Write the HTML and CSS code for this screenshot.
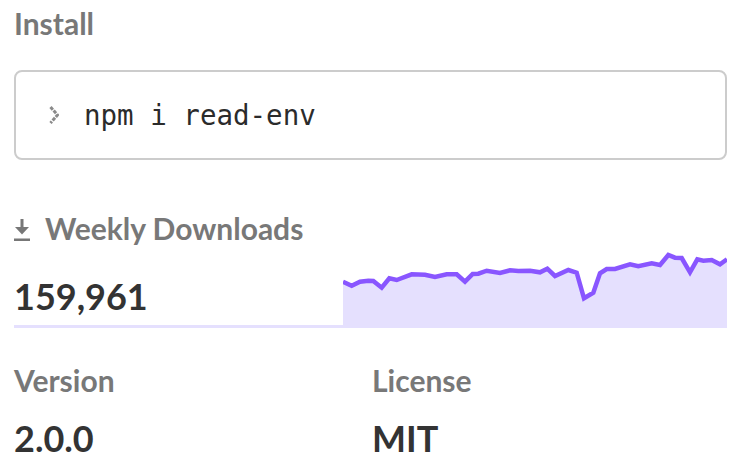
FILE: index.html
```html
<!DOCTYPE html>
<html>
<head>
<meta charset="utf-8">
<link rel="stylesheet" href="styles.css">
</head>
<body>
<div class="sidebar">
  <h3 class="label install-label">Install</h3>
  <div class="code-box">
    <svg class="chevron" width="10" height="20" viewBox="0 0 10 20"><polyline points="1.5,2 8.5,10 1.5,18" fill="none" stroke="#8a8a8a" stroke-width="3" stroke-dasharray="3.6 1.2"/></svg>
    <code class="cmd">npm i read-env</code>
  </div>

  <h3 class="label dl-label">
    <svg class="dl-icon" width="16" height="22" viewBox="0 0 16 22"><rect x="6.5" y="0" width="3" height="9" fill="#777"/><polygon points="1,8 15,8 8,15.5" fill="#777"/><rect x="0" y="19.5" width="16" height="2.5" fill="#777"/></svg>
    <span>Weekly Downloads</span>
  </h3>
  <div class="stats">
    <p class="count">159,961</p>
    <svg class="spark" width="384" height="80" viewBox="0 0 384 80">
      <polygon fill="#e5e0fe" points="0,33.7 8.7,37.7 17,33.7 25.3,32.7 30.3,33 38.7,39.7 46.3,30.3 53.7,32 68.7,26.3 82,26.7 92,29 103.7,26.3 113.7,26.3 122,33.7 129.7,26 135.3,25.7 143.7,22.7 157,25 167,22.3 175.3,23 187,22.7 197,24.3 204.3,20.7 212,28 225.3,22 233.7,24.7 241,50.3 250.3,44.7 257,25.3 263.7,21 272,21 287,16.3 295.3,18.3 308.7,15.3 317,17 325.3,7 332,9.7 338.7,10 347,24.3 354.3,11.3 360.3,12.7 368.7,12 377,16.3 384,11.3 384,80 0,80"/>
      <polyline fill="none" stroke="#8956ff" stroke-width="4.5" stroke-linejoin="miter" points="0,33.7 8.7,37.7 17,33.7 25.3,32.7 30.3,33 38.7,39.7 46.3,30.3 53.7,32 68.7,26.3 82,26.7 92,29 103.7,26.3 113.7,26.3 122,33.7 129.7,26 135.3,25.7 143.7,22.7 157,25 167,22.3 175.3,23 187,22.7 197,24.3 204.3,20.7 212,28 225.3,22 233.7,24.7 241,50.3 250.3,44.7 257,25.3 263.7,21 272,21 287,16.3 295.3,18.3 308.7,15.3 317,17 325.3,7 332,9.7 338.7,10 347,24.3 354.3,11.3 360.3,12.7 368.7,12 377,16.3 384,11.3"/>
    </svg>
  </div>

  <div class="meta">
    <div class="meta-item">
      <h3 class="label meta-label">Version</h3>
      <p class="value">2.0.0</p>
    </div>
    <div class="meta-item">
      <h3 class="label meta-label">License</h3>
      <p class="value">MIT</p>
    </div>
  </div>
</div>
</body>
</html>
```

FILE: styles.css
```css
html, body {
  margin: 0;
  padding: 0;
  background: #ffffff;
}

.sidebar {
  padding: 0 7px 0 14px;
  font-family: "Lato", "Liberation Sans", sans-serif;
}

.label {
  margin: 0;
  font-size: 30px;
  line-height: 36px;
  font-weight: 700;
  color: #787878;
}

.install-label {
  margin-top: 5px;
}

.code-box {
  margin-top: 29px;
  height: 86px;
  border: 2px solid #cccccc;
  border-radius: 8px;
  display: flex;
  align-items: center;
  padding-left: 33px;
  gap: 25px;
}

.chevron {
  display: block;
  flex: none;
}

.cmd {
  font-family: "DejaVu Sans Mono", "Liberation Mono", monospace;
  font-size: 27.5px;
  line-height: 32px;
  color: #2b2b2b;
}

.dl-label {
  margin-top: 50px;
  display: flex;
  align-items: center;
  gap: 15px;
}

.dl-icon {
  display: block;
  flex: none;
  margin-top: 4px;
}

.stats {
  display: flex;
  align-items: flex-end;
  height: 82px;
}

.count {
  margin: 0;
  width: 329px;
  flex: none;
  font-size: 36px;
  line-height: 44px;
  font-weight: 700;
  color: #333333;
  padding-bottom: 7px;
  border-bottom: 3px solid #e5e0fe;
}

.spark {
  display: block;
  flex: none;
}

.meta {
  margin-top: 34px;
  display: grid;
  grid-template-columns: 358px 1fr;
}

.value {
  margin: 18px 0 0 0;
  font-size: 36px;
  line-height: 44px;
  font-weight: 700;
  color: #333333;
}
```
